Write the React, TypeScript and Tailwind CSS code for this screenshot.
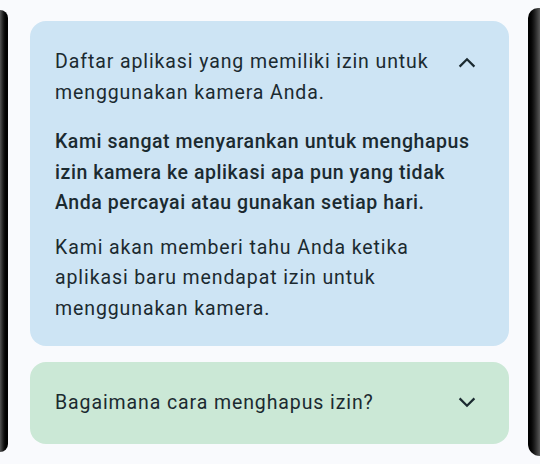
import React from 'react';

const Chevron = ({ up }: { up?: boolean }) => (
  <svg width="18" height="12" viewBox="0 0 18 12" className="shrink-0 text-[#1b2a30]">
    <path
      d={up ? 'M1.6 10.6 9 3.2l7.4 7.4' : 'M1.6 1.4 9 8.8l7.4-7.4'}
      fill="none"
      stroke="currentColor"
      strokeWidth="2.2"
    />
  </svg>
);

export default function App() {
  return (
    <div
      className="flex w-[540px] h-[464px] bg-[#f9fafd] overflow-hidden text-[#1b2a30]"
      style={{ fontFamily: 'Roboto, "Noto Sans", sans-serif' }}
    >
      {/* phone edge, left */}
      <div className="w-[8px] mt-[10px] mb-[12px] rounded-tr-[10px] rounded-br-[10px] bg-gradient-to-r from-[#555] via-[#111] to-black" />

      <div className="ml-[22px] w-[479px] pt-[21px] flex flex-col gap-4">
        {/* expanded card */}
        <div className="bg-[#cde4f4] rounded-[16px] pl-[25px] pr-[33px] pt-[25px] pb-[22px]">
          <div className="flex items-start justify-between">
            <p className="w-[400px] text-[19.5px] leading-[31px] tracking-[0.9px]">
              Daftar aplikasi yang memiliki izin untuk menggunakan kamera Anda.
            </p>
            <div className="mt-[10px]">
              <Chevron up />
            </div>
          </div>
          <p className="mt-[19px] w-[425px] text-[19.5px] leading-[30.5px] font-medium tracking-[0.55px]">
            Kami sangat menyarankan untuk menghapus izin kamera ke aplikasi apa pun yang tidak Anda percayai atau gunakan setiap hari.
          </p>
          <p className="mt-[14px] w-[425px] text-[19.5px] leading-[30.5px] tracking-[0.9px]">
            Kami akan memberi tahu Anda ketika aplikasi baru mendapat izin untuk menggunakan kamera.
          </p>
        </div>

        {/* collapsed card */}
        <div className="bg-[#cbe8d6] rounded-[16px] pl-[25px] pr-[33px] py-[26px] flex items-center justify-between">
          <p className="text-[19.5px] leading-[30px] tracking-[0.9px]">Bagaimana cara menghapus izin?</p>
          <Chevron />
        </div>
      </div>

      {/* phone edge, right */}
      <div className="ml-auto w-[12px] mt-[8px] mb-[8px] rounded-tl-[10px] rounded-bl-[12px] bg-gradient-to-r from-black via-[#1a1a1a] to-[#5a5a5a]" />
    </div>
  );
}
